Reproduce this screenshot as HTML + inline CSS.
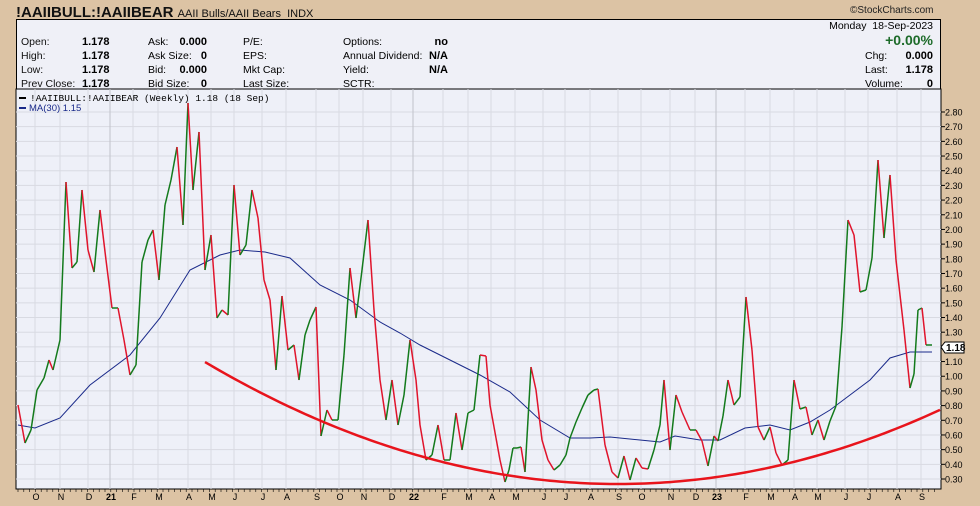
<!DOCTYPE html><html><head><meta charset="utf-8"><style>
body{margin:0;width:980px;height:506px;background:#dcc3a4;font-family:"Liberation Sans",sans-serif;position:relative;overflow:hidden}
.t{position:absolute;white-space:nowrap}
</style></head><body>
<div class="t" style="left:16px;top:4px;font-size:15px;font-weight:bold;color:#111">!AAIIBULL:!AAIIBEAR <span style="font-size:11px;font-weight:normal">AAII Bulls/AAII Bears&nbsp; INDX</span></div>
<div class="t" style="left:850px;top:5px;font-size:10px;color:#222">©StockCharts.com</div>
<div style="position:absolute;left:16px;top:19px;width:923px;height:70px;background:#eff0f7;border:1px solid #000;border-bottom:none"></div>
<div class="t" style="left:21px;top:35px;font-size:10.5px;line-height:14px;color:#111">Open:<br>High:<br>Low:<br>Prev Close:</div>
<div class="t" style="left:82px;top:35px;font-size:11px;line-height:14px;font-weight:bold">1.178<br>1.178<br>1.178<br>1.178</div>
<div class="t" style="left:148px;top:35px;font-size:10.5px;line-height:14px">Ask:<br>Ask Size:<br>Bid:<br>Bid Size:</div>
<div class="t" style="left:176px;top:35px;font-size:11px;line-height:14px;font-weight:bold;text-align:right;width:31px">0.000<br>0<br>0.000<br>0</div>
<div class="t" style="left:243px;top:35px;font-size:10.5px;line-height:14px">P/E:<br>EPS:<br>Mkt Cap:<br>Last Size:</div>
<div class="t" style="left:343px;top:35px;font-size:10.5px;line-height:14px">Options:<br>Annual Dividend:<br>Yield:<br>SCTR:</div>
<div class="t" style="left:428px;top:35px;font-size:11px;line-height:14px;font-weight:bold;text-align:right;width:20px">no<br>N/A<br>N/A</div>
<div class="t" style="left:820px;top:20px;font-size:10.5px;width:113px;text-align:right">Monday&nbsp; 18-Sep-2023</div>
<div class="t" style="left:820px;top:32px;font-size:14px;width:113px;text-align:right;color:#1d6b2a;font-weight:bold">+0.00%</div>
<div class="t" style="left:865px;top:49px;font-size:10.5px;line-height:14px">Chg:<br>Last:<br>Volume:</div>
<div class="t" style="left:880px;top:49px;font-size:11px;line-height:14px;font-weight:bold;width:53px;text-align:right">0.000<br>1.178<br>0</div>
<svg id="s" style="position:absolute;left:0;top:0" width="980" height="506"></svg>
<script>
var s=document.getElementById('s'),h='';
h+='<rect x="16" y="89" width="925" height="400" fill="#eef0f8" stroke="#000" stroke-width="1"/>';
var Y=function(v){return 112+(2.8-v)*146.8};
for(var v=0.3;v<2.85;v+=0.1){var y=Y(v);h+='<line x1="16" x2="941" y1="'+y+'" y2="'+y+'" stroke="#d8dae2"/>';h+='<line x1="941" x2="945" y1="'+y+'" y2="'+y+'" stroke="#000"/><text x="945" y="'+(y+3.5)+'" font-size="9" fill="#000">'+v.toFixed(2)+'</text>';}
var m=[[36,'O'],[61,'N'],[89,'D'],[111,'21'],[134,'F'],[159,'M'],[189,'A'],[212,'M'],[235,'J'],[263,'J'],[287,'A'],[317,'S'],[340,'O'],[364,'N'],[392,'D'],[414,'22'],[444,'F'],[469,'M'],[492,'A'],[516,'M'],[544,'J'],[566,'J'],[591,'A'],[619,'S'],[642,'O'],[671,'N'],[696,'D'],[717,'23'],[746,'F'],[771,'M'],[795,'A'],[818,'M'],[846,'J'],[869,'J'],[898,'A'],[922,'S']];
m.forEach(function(a){var x=a[0]-1;h+='<line x1="'+x+'" x2="'+x+'" y1="89" y2="489" stroke="'+(a[1].length>1?'#c0c2ca':'#d8dae2')+'"/><text x="'+a[0]+'" y="500" font-size="9" text-anchor="middle" font-weight="'+(a[1].length>1?'bold':'normal')+'">'+a[1]+'</text>';});
for(var x=18;x<940;x+=5.8)h+='<line x1="'+x+'" x2="'+x+'" y1="489" y2="492" stroke="#000" stroke-width="0.6"/>';
var ma=[[18,425],[35,428],[60,418],[90,385],[130,355],[160,318],[190,270],[220,255],[240,250],[265,252],[290,258],[320,285],[350,300],[380,322],[400,333],[420,345],[450,360],[480,375],[510,392],[540,420],[570,438],[590,438],[610,437],[640,440],[660,442],[675,436],[700,440],[720,440],[745,428],[770,425],[790,430],[810,422],[830,410],[850,395],[870,380],[890,358],[910,352],[932,352]];
h+='<polyline fill="none" stroke="#1a2a8a" stroke-width="1" points="'+ma.join(' ')+'"/>';
var p=[18,405,25,443,31,430,37,390,44,378,49,360,53,370,60,340,66,182,72,268,77,262,82,190,88,250,94,272,100,210,106,260,112,308,118,308,124,340,130,375,136,365,142,262,148,240,153,230,159,280,165,205,171,180,177,147,183,225,188,103,193,190,199,132,205,270,211,235,217,318,222,310,228,315,234,185,240,255,246,245,252,190,258,218,264,280,270,300,276,370,282,296,288,350,294,345,299,380,305,335,310,320,316,307,321,436,327,410,332,420,338,420,344,355,350,268,356,318,362,270,368,220,374,310,380,380,386,420,392,380,398,425,404,395,410,340,416,380,420,425,426,460,432,455,438,425,444,460,450,460,456,413,462,450,468,413,474,410,480,355,486,356,490,405,496,438,500,460,505,482,509,470,513,448,517,448,521,447,525,472,531,367,536,390,542,440,548,460,554,470,560,465,566,455,570,438,576,422,582,408,588,395,594,390,598,389,605,445,612,472,618,478,624,456,630,480,636,458,642,468,648,469,654,450,660,425,664,380,670,450,676,395,682,412,690,430,696,430,702,441,708,466,714,436,718,441,723,416,728,380,734,405,740,397,746,297,752,350,758,427,764,440,770,427,776,453,782,465,788,460,794,380,800,409,806,407,812,435,818,420,824,440,830,421,836,406,842,327,848,220,854,235,860,292,866,290,872,258,878,160,884,238,890,175,896,260,904,330,910,388,914,374,918,310,922,308,926,345,932,345];
for(var i=0;i<p.length-2;i+=2){h+='<line x1="'+p[i]+'" y1="'+p[i+1]+'" x2="'+p[i+2]+'" y2="'+p[i+3]+'" stroke="'+(p[i+3]>p[i+1]?'#e0142c':'#137a1c')+'" stroke-width="1.5"/>';}
var c=[];for(var x=205;x<=940;x+=5){c.push(x+','+(484-0.000715*(x-618)*(x-618)));}
h+='<polyline fill="none" stroke="#e8141c" stroke-width="2.5" points="'+c.join(' ')+'"/>';
h+='<path d="M941,347 l4,-5 h19 v11 h-19 z" fill="#fff" stroke="#000"/><text x="946" y="351" font-size="10" font-weight="bold">1.18</text>';
h+='<line x1="19" x2="26" y1="98" y2="98" stroke="#000" stroke-width="2"/><text x="30" y="101" font-size="9.5" font-family="Liberation Mono" fill="#000">!AAIIBULL:!AAIIBEAR (Weekly) 1.18 (18 Sep)</text>';
h+='<line x1="19" x2="26" y1="108" y2="108" stroke="#1a2a8a" stroke-width="2"/><text x="29" y="111" font-size="9.5" fill="#1a2a8a">MA(30) 1.15</text>';
s.innerHTML=h;
</script>
</body></html>
